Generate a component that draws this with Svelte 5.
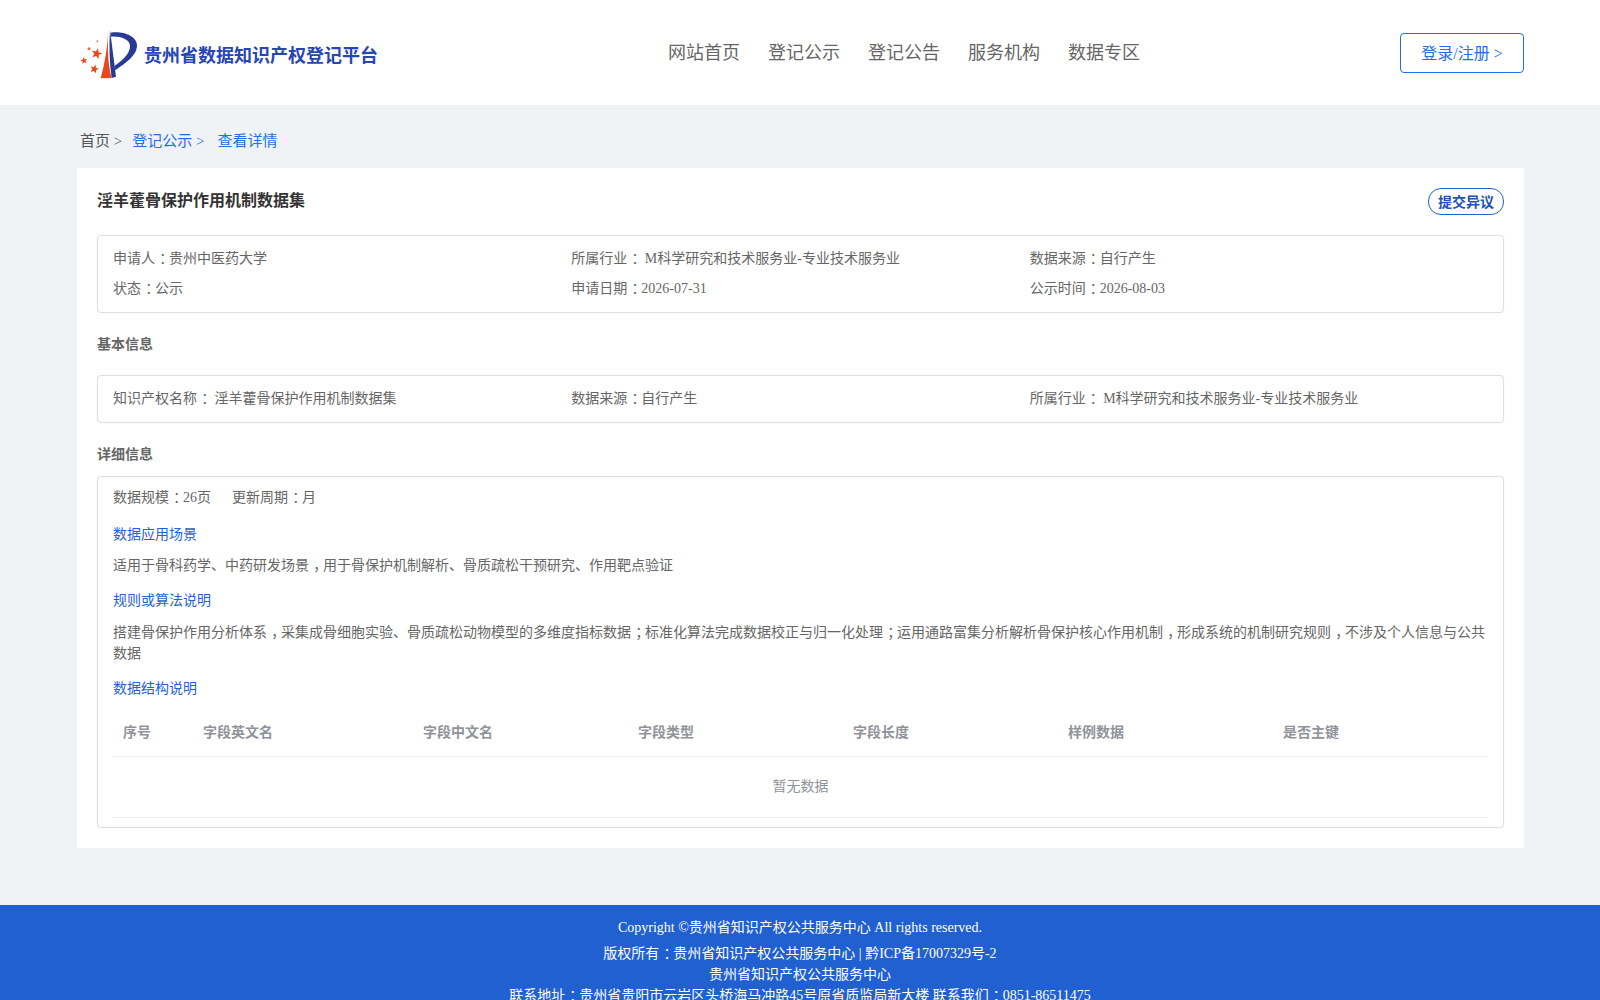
<script>
  const columns = ['序号', '字段英文名', '字段中文名', '字段类型', '字段长度', '样例数据', '是否主键'];
  const nav = ['网站首页', '登记公示', '登记公告', '服务机构', '数据专区'];
  const industry = 'M科学研究和技术服务业-专业技术服务业';

  // Five-pointed star outline, for the logo's red stars.
  function star(cx, cy, r, rot) {
    const pts = [];
    for (let i = 0; i < 10; i++) {
      const rad = i % 2 ? r * 0.42 : r;
      const a = ((rot + i * 36 - 90) * Math.PI) / 180;
      pts.push(`${(cx + rad * Math.cos(a)).toFixed(1)},${(cy + rad * Math.sin(a)).toFixed(1)}`);
    }
    return pts.join(' ');
  }
  const stars = [
    [80, 113, 17, 15],
    [42, 134, 11, -10],
    [73, 159, 14, 15]
  ];

  // Split text so full-width punctuation can sit centred in its cell.
  function parts(text) {
    return text.split(/([：，；])/).filter(Boolean);
  }
  const isPunct = (s) => /^[：，；]$/.test(s);
</script>

{#snippet rich(text)}{#each parts(text) as p}{#if isPunct(p)}<span class="punct">{p}</span>{:else}{p}{/if}{/each}{/snippet}

<div class="page">
  <header class="header">
    <div class="brand">
      <svg class="logo" viewBox="21 27 198 168" width="66" height="56" aria-hidden="true">
        <path d="M115 42 C113 90 112 140 125 186 L92 187 C105 140 113 90 115 42 Z" fill="#e8481c" />
        <path d="M120 42 L138 182 L125 186 C118 140 117 90 120 42 Z" fill="#2a3a94" />
        <path d="M122 50 C155 44 201 58 201 88 C201 120 165 142 136 163 L133 150 C156 134 180 114 180 90 C180 70 150 60 123 62 Z" fill="#2a3a94" />
        {#each stars as s}
          <polygon points={star(s[0], s[1], s[2], s[3])} fill="#e8481c" />
        {/each}
        <circle cx="57" cy="98" r="4.500" fill="#ee6a3c" />
        <circle cx="82" cy="76" r="3" fill="#f08a60" />
      </svg>
      <span class="brand-name">贵州省数据知识产权登记平台</span>
    </div>
    <nav class="nav">
      {#each nav as item}
        <span class="nav-item">{item}</span>
      {/each}
    </nav>
    <button class="login">登录/注册 &gt;</button>
  </header>

  <div class="crumbs">
    <span class="crumb-home">首页 &gt;</span>
    <span class="crumb-link">登记公示 &gt;</span>
    <span class="crumb-link">查看详情</span>
  </div>

  <main class="card">
    <div class="title-row">
      <h1 class="title">淫羊藿骨保护作用机制数据集</h1>
      <button class="objection">提交异议</button>
    </div>

    <section class="box summary">
      <div>{@render rich('申请人：贵州中医药大学')}</div>
      <div>{@render rich('所属行业： ' + industry)}</div>
      <div>{@render rich('数据来源：自行产生')}</div>
      <div>{@render rich('状态：公示')}</div>
      <div>{@render rich('申请日期：2026-07-31')}</div>
      <div>{@render rich('公示时间：2026-08-03')}</div>
    </section>

    <h2 class="section-title basic">基本信息</h2>
    <section class="box basic-box">
      <div>{@render rich('知识产权名称： 淫羊藿骨保护作用机制数据集')}</div>
      <div>{@render rich('数据来源：自行产生')}</div>
      <div>{@render rich('所属行业： ' + industry)}</div>
    </section>

    <h2 class="section-title detail">详细信息</h2>
    <section class="box detail-box">
      <div class="meta"><span>{@render rich('数据规模：26页')}</span><span>{@render rich('更新周期：月')}</span></div>
      <h3 class="sub">数据应用场景</h3>
      <p class="para first">{@render rich('适用于骨科药学、中药研发场景，用于骨保护机制解析、骨质疏松干预研究、作用靶点验证')}</p>
      <h3 class="sub">规则或算法说明</h3>
      <p class="para second">{@render rich('搭建骨保护作用分析体系，采集成骨细胞实验、骨质疏松动物模型的多维度指标数据；标准化算法完成数据校正与归一化处理；运用通路富集分析解析骨保护核心作用机制，形成系统的机制研究规则，不涉及个人信息与公共数据')}</p>
      <h3 class="sub">数据结构说明</h3>
      <div class="table">
        <div class="thead">
          {#each columns as col}
            <div class="th">{col}</div>
          {/each}
        </div>
        <div class="empty">暂无数据</div>
      </div>
    </section>
  </main>

  <footer class="footer">
    <div class="copyright">Copyright ©贵州省知识产权公共服务中心 All rights reserved.</div>
    <div>{@render rich('版权所有：贵州省知识产权公共服务中心')} | 黔ICP备17007329号-2</div>
    <div>贵州省知识产权公共服务中心</div>
    <div>{@render rich('联系地址：贵州省贵阳市云岩区头桥海马冲路45号原省质监局新大楼 联系我们：0851-86511475')}</div>
  </footer>
</div>

<style>
  :global(body) {
    margin: 0;
    background: #eff3f6;
    font-family: "Liberation Serif", "Noto Sans CJK SC", serif;
  }
  .page {
    display: flex;
    flex-direction: column;
    color: #666;
    font-size: 14px;
  }
  .punct {
    padding-left: 0.3em;
    letter-spacing: -0.3em;
  }
  .header {
    height: 105px;
    box-sizing: border-box;
    background: #fff;
    padding: 0 76px 0 77px;
    display: flex;
    align-items: center;
  }
  .brand {
    display: flex;
    align-items: center;
    gap: 1px;
    flex: none;
  }
  .logo {
    flex: none;
  }
  .brand-name {
    font-size: 18px;
    font-weight: 700;
    color: #2746b5;
    padding-top: 2px;
  }
  .nav {
    display: flex;
    gap: 28px;
    margin-left: 290px;
    font-size: 18px;
    line-height: 24px;
    color: #666;
  }
  .login {
    margin-left: auto;
    width: 124px;
    height: 40px;
    padding: 0 0 2px;
    background: #fff;
    border: 1px solid #1f6fe5;
    border-radius: 4px;
    color: #1f6fe5;
    font: inherit;
    font-size: 16px;
  }
  .crumbs {
    height: 63px;
    box-sizing: border-box;
    padding: 26px 0 0 80px;
    font-size: 15px;
    line-height: 20px;
    display: flex;
  }
  .crumb-home {
    color: #555;
    margin-right: 10px;
  }
  .crumb-link {
    color: #1f6fe5;
    margin-right: 13px;
  }
  .card {
    margin: 0 76px 0 77px;
    height: 680px;
    box-sizing: border-box;
    background: #fff;
    padding: 20px;
  }
  .title-row {
    display: flex;
    justify-content: space-between;
    align-items: flex-start;
    height: 47px;
  }
  .title {
    margin: 0;
    font-size: 16px;
    line-height: 25px;
    font-weight: 700;
    color: #333;
  }
  .objection {
    width: 76px;
    height: 27px;
    padding: 0 0 2px;
    box-sizing: border-box;
    background: #fff;
    border: 1px solid #2060d0;
    border-radius: 13px;
    color: #2051b8;
    font: inherit;
    font-size: 14px;
    font-weight: 700;
  }
  .box {
    border: 1px solid #dcdfe6;
    border-radius: 4px;
    box-shadow: 0 0 1px #dcdfe6;
    box-sizing: border-box;
    padding: 0 15px;
    font-size: 14px;
    color: #666;
  }
  .summary {
    height: 78px;
    padding-top: 6px;
    display: grid;
    grid-template-columns: repeat(3, 1fr);
    grid-auto-rows: 30px;
    align-items: center;
  }
  .section-title {
    margin: 0;
    font-size: 14px;
    font-weight: 700;
    line-height: 20px;
    color: #666;
  }
  .basic {
    padding: 22px 0 20px;
  }
  .basic-box {
    height: 48px;
    padding-bottom: 5px;
    display: grid;
    grid-template-columns: repeat(3, 1fr);
    align-items: center;
  }
  .detail {
    padding: 22px 0 11px;
  }
  .detail-box {
    height: 352px;
    padding-top: 9px;
  }
  .meta {
    display: flex;
    gap: 21px;
    line-height: 24px;
  }
  .sub {
    margin: 0;
    font-size: 14px;
    font-weight: 400;
    line-height: 21px;
    color: #1f62d0;
  }
  .meta + .sub {
    margin-top: 14px;
  }
  .para {
    line-height: 21px;
  }
  .para.first {
    margin: 10px 0 14px;
  }
  .para.second {
    margin: 11px 0 14px;
  }
  .table {
    margin-top: 10px;
  }
  .thead {
    display: grid;
    grid-template-columns: 80px 220px repeat(5, 1fr);
    height: 48px;
    padding-bottom: 4px;
    box-sizing: border-box;
    align-items: center;
    border-bottom: 1px solid #ebeef5;
    color: #909399;
    font-weight: 700;
  }
  .th {
    padding-left: 10px;
  }
  .empty {
    height: 60px;
    line-height: 60px;
    text-align: center;
    color: #909399;
    border-bottom: 1px solid #ebeef5;
  }
  .footer {
    margin-top: 57px;
    background: #2060d0;
    color: #fff;
    text-align: center;
    font-size: 14px;
    line-height: 21px;
    padding: 12px 0 14px;
  }
  .copyright {
    margin-bottom: 5px;
  }
</style>
